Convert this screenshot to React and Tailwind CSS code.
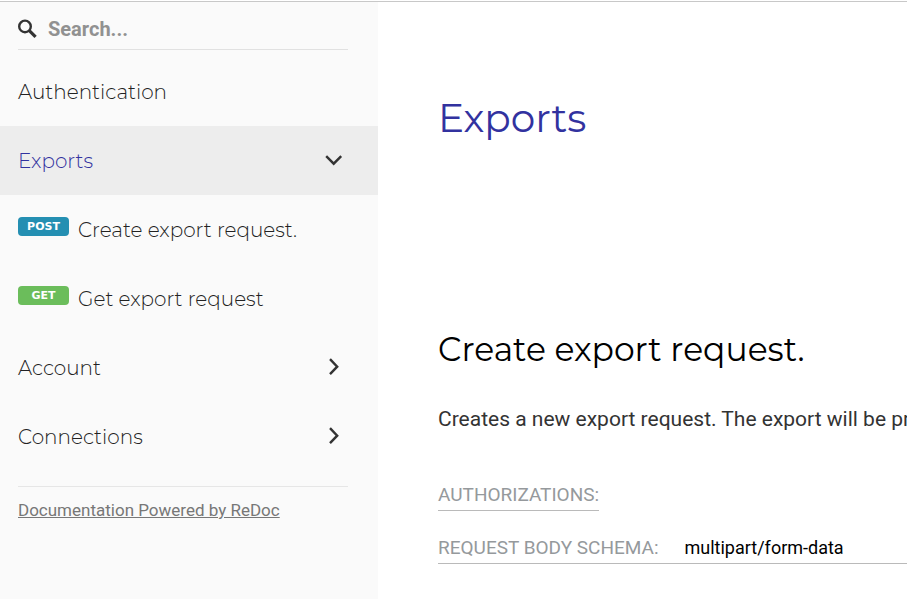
import React from 'react';

const heading = "font-['Montserrat',sans-serif]";

function Chevron({ open }) {
  return (
    <svg className="mb-[2px] h-6 w-6 shrink-0" viewBox="0 0 24 24" fill="none" stroke="#333333" strokeWidth="2.4" strokeLinecap="butt" aria-hidden="true">
      {open ? <path d="M4.2 8.2 L11.7 15.7 L19.2 8.2" /> : <path d="M8 4.2 L15.2 11.7 L8 19.2" />}
    </svg>
  );
}

function NavItem({ label, chevron, active }) {
  return (
    <li>
      <a
        href="#"
        className={`flex h-[69px] items-center justify-between pl-[18px] pr-8 text-[20px] leading-7 font-light ${heading} ${
          active ? 'bg-[#ededed] text-[#32329f]' : 'text-[#222222]'
        }`}
      >
        <span>{label}</span>
        {chevron && <Chevron open={chevron === 'down'} />}
      </a>
    </li>
  );
}

function Operation({ verb, color, label }) {
  return (
    <li>
      <a href="#" className={`flex h-[69px] items-center gap-[9px] pl-[18px] text-[20px] leading-7 font-light text-[#222222] ${heading}`}>
        <span className={`mb-[6px] h-[19px] w-[51px] rounded text-center font-['Verdana','DejaVu_Sans',sans-serif] text-[11px] leading-5 font-bold text-white ${color}`}>
          {verb}
        </span>
        <span className="whitespace-nowrap">{label}</span>
      </a>
    </li>
  );
}

export default function App() {
  return (
    <div className="flex min-h-screen flex-col overflow-hidden bg-white pt-px font-['Roboto',sans-serif]">
      <div className="flex flex-1 border-t border-[#c8c8c8]">
        <aside className="w-[378px] shrink-0 bg-[#fafafa]">
          <label className="mr-[30px] ml-[18px] flex h-12 items-center gap-[10px] border-b border-[#e1e1e1] pt-[6px]">
            <svg className="h-5 w-5 shrink-0" viewBox="0 0 20 20" fill="none" stroke="#333333" aria-hidden="true">
              <circle cx="7" cy="7.4" r="5.8" strokeWidth="2.4" />
              <path d="M11.3 11.7 L17.6 17.9" strokeWidth="3.2" />
            </svg>
            <input
              type="text"
              aria-label="Search"
              placeholder="Search..."
              className="h-7 min-w-0 flex-1 bg-transparent text-[20px] font-bold text-[#333333] outline-none placeholder:text-[#919191]"
            />
          </label>
          <nav className="pt-[7px]">
            <ul>
              <NavItem label="Authentication" />
              <NavItem label="Exports" chevron="down" active />
              <Operation verb="POST" color="bg-[#248fb2]" label="Create export request." />
              <Operation verb="GET" color="bg-[#6bbd5b]" label="Get export request" />
              <NavItem label="Account" chevron="right" />
              <NavItem label="Connections" chevron="right" />
            </ul>
          </nav>
          <div className="mr-[30px] ml-[18px] mt-[15px] border-t border-[#e6e6e6] pt-[11px] text-[17px] leading-6">
            <a href="#" className="text-[#777777] underline">
              Documentation Powered by ReDoc
            </a>
          </div>
        </aside>
        <main className="min-w-0 flex-1 overflow-hidden pt-[92px] pl-[60px]">
          <h1 className={`text-[39px] leading-[48px] font-normal text-[#32329f] ${heading}`}>Exports</h1>
          <section className="pt-[187px]">
            <h2 className={`text-[33px] leading-10 font-normal whitespace-nowrap text-black ${heading}`}>Create export request.</h2>
            <p className="mt-[34px] text-[21px] leading-8 whitespace-nowrap text-[#333333]">
              Creates a new export request. The export will be processed
            </p>
            <h5 className="mt-12 w-fit border-b border-[#bababa] pb-[3px] text-[19px] leading-6 text-[#95999c]">
              AUTHORIZATIONS:
            </h5>
            <h5 className="mt-[25px] flex gap-[26px] border-b border-[#bababa] pb-[3px] text-[19px] leading-6 whitespace-nowrap text-[#95999c]">
              <span>REQUEST BODY SCHEMA:</span>
              <span className="text-[18px] text-black">multipart/form-data</span>
            </h5>
          </section>
        </main>
      </div>
    </div>
  );
}
